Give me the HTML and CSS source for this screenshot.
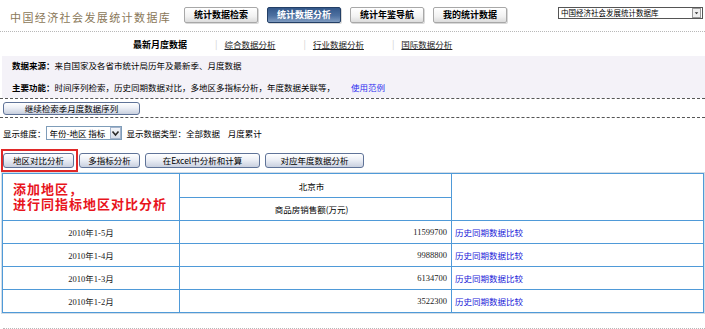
FILE: index.html
```html
<!DOCTYPE html>
<html lang="zh-CN">
<head>
    <meta charset="UTF-8">
    <meta name="viewport" content="width=device-width, initial-scale=1.0">
    <title>中国经济社会发展统计数据库</title>
    <link rel="stylesheet" href="styles.css">
</head>
<body>
    <div class="header">
        <div class="logo">中国经济社会发展统计数据库</div>
        <div class="tabs">
            <div class="tab">统计数据检索</div>
            <div class="tab active">统计数据分析</div>
            <div class="tab">统计年鉴导航</div>
            <div class="tab">我的统计数据</div>
        </div>
        <span class="select-wrap db-select">
            <select>
                <option>中国经济社会发展统计数据库</option>
            </select>
            <span class="arrow">
                <svg width="8" height="8" viewBox="0 0 8 8"><polygon points="2,3 6,3 4,5.5" fill="#333"/></svg>
            </span>
        </span>
    </div>

    <div class="subnav">
        <span class="current">最新月度数据</span>
        <span class="sep">|</span><a href="#">综合数据分析</a>
        <span class="sep">|</span><a href="#">行业数据分析</a>
        <span class="sep">|</span><a href="#">国际数据分析</a>
    </div>

    <!-- 数据库说明 -->
    <div class="info">
        <p><strong>数据来源：</strong>来自国家及各省市统计局历年及最新季、月度数据</p>
        <p><strong>主要功能：</strong>时间序列检索，历史同期数据对比，多地区多指标分析，年度数据关联等，<a class="demo" href="#">使用范例</a></p>
    </div>

    <div class="more-row">
        <button class="btn btn-more">继续检索季月度数据序列</button>
    </div>

    <div class="dim-row">
        显示维度：
        <span class="select-wrap dim-select">
            <select>
                <option>年份-地区 指标</option>
            </select>
            <span class="arrow">
                <svg width="9" height="11" viewBox="0 0 9 11"><path d="M1.5 3.5 L4.5 7 L7.5 3.5" fill="none" stroke="#2a2a2a" stroke-width="1.6"/></svg>
            </span>
        </span>
        <span class="dim-type">显示数据类型：全部数据&nbsp;&nbsp;&nbsp;&nbsp;月度累计</span>
    </div>

    <div class="actions">
        <span class="mark"><button class="btn btn-compare">地区对比分析</button></span>
        <button class="btn btn-multi">多指标分析</button>
        <button class="btn btn-excel">在Excel中分析和计算</button>
        <button class="btn btn-year">对应年度数据分析</button>
    </div>

    <table class="data">
        <colgroup>
            <col class="col-time">
            <col class="col-value">
            <col class="col-link">
        </colgroup>
        <tr class="head-row">
            <td rowspan="2" class="note">添加地区，<br>进行同指标地区对比分析</td>
            <td class="center">北京市</td>
            <td rowspan="2"></td>
        </tr>
        <tr>
            <td class="center">商品房销售额(万元)</td>
        </tr>
        <tr>
            <td class="time">2010年1-5月</td>
            <td class="num">11599700</td>
            <td class="link"><a href="#">历史同期数据比较</a></td>
        </tr>
        <tr>
            <td class="time">2010年1-4月</td>
            <td class="num">9988800</td>
            <td class="link"><a href="#">历史同期数据比较</a></td>
        </tr>
        <tr>
            <td class="time">2010年1-3月</td>
            <td class="num">6134700</td>
            <td class="link"><a href="#">历史同期数据比较</a></td>
        </tr>
        <tr>
            <td class="time">2010年1-2月</td>
            <td class="num">3522300</td>
            <td class="link"><a href="#">历史同期数据比较</a></td>
        </tr>
    </table>

    <div class="footer-line"></div>
</body>
</html>
```

FILE: styles.css
```css
* {
    box-sizing: border-box;
}

body {
    margin: 0;
    font-family: "Noto Sans CJK SC", sans-serif;
    font-size: 8.5px;
    color: #000;
    background: #fff;
}

a {
    text-decoration: none;
}

/* header */
.header {
    display: flex;
    align-items: flex-start;
    height: 32px;
    padding-top: 7px;
    border-bottom: 1px dotted #b8b8b8;
}

.logo {
    width: 184px;
    padding-left: 10px;
    margin-top: 3px;
    font-size: 11px;
    line-height: 14px;
    letter-spacing: 1.4px;
    color: #8a7758;
    white-space: nowrap;
}

.tabs {
    display: flex;
    gap: 9px;
}

.tab {
    width: 74px;
    height: 16px;
    line-height: 14px;
    font-size: 9px;
    font-weight: bold;
    text-align: center;
    border: 1px solid #a8a8a8;
    border-radius: 2px;
    background: linear-gradient(#ffffff, #f2f2f2 60%, #dcdcdc);
    box-shadow: 1px 1px 0 #d8d8d8;
}

.tab.active {
    color: #fff;
    border-color: #233f66;
    background: linear-gradient(#34588a, #4d70a0 55%, #7f9bc0);
}

.select-wrap {
    position: relative;
    display: inline-block;
}

.select-wrap select {
    appearance: none;
    -webkit-appearance: none;
    display: block;
    margin: 0;
    padding: 0 0 0 2px;
    font-family: "Noto Sans CJK SC", sans-serif;
    color: #000;
    background: #fff;
    border: 1px solid #7f9db9;
    border-radius: 0;
}

.select-wrap .arrow {
    position: absolute;
    display: flex;
    align-items: center;
    justify-content: center;
}

.db-select {
    margin-left: auto;
    margin-right: 2px;
}

.db-select select {
    width: 145px;
    height: 12px;
    font-size: 7.5px;
    line-height: 10px;
    border-color: #555;
}

.db-select .arrow {
    right: 2px;
    top: 1px;
    width: 9px;
    height: 10px;
    border: 1px solid #9a9a9a;
    background: #f0f0f0;
}

/* sub navigation */
.subnav {
    display: flex;
    align-items: center;
    height: 24px;
    padding-left: 133px;
    font-size: 9px;
}

.subnav .current {
    font-weight: bold;
}

.subnav .sep {
    color: #d0d0d0;
    margin: 0 7px 0 28px;
}

.subnav a {
    color: #222;
    font-size: 8.5px;
    text-decoration: underline;
}

/* info box */
.info {
    height: 42px;
    margin-left: 2px;
    padding: 3px 0 0 10px;
    background: #f4f2f8;
}

.info p {
    margin: 0 0 10px;
    line-height: 12px;
}

.info .demo {
    color: #2e2ef0;
    margin-left: 16px;
}

.more-row {
    height: 20px;
    padding: 3px 0 0 3px;
    border-top: 1px dashed #555;
    border-bottom: 1px dashed #555;
}

.btn {
    height: 15px;
    padding: 0;
    font-family: "Noto Sans CJK SC", sans-serif;
    font-size: 8.5px;
    line-height: 13px;
    color: #000;
    border: 1px solid #5f7398;
    border-radius: 3px;
    background: linear-gradient(#ffffff, #eceff6 45%, #c9d0df);
    cursor: pointer;
}

.btn-more {
    width: 137px;
    height: 13px;
    line-height: 11px;
}

.dim-row {
    display: flex;
    align-items: center;
    height: 22px;
    padding: 8px 0 0 3px;
}

.dim-select select {
    width: 76px;
    height: 14px;
    font-size: 8.5px;
    line-height: 12px;
    padding-left: 3px;
}

.dim-select .arrow {
    right: 1px;
    top: 1px;
    width: 11px;
    height: 12px;
    border: 1px solid #a4b4cc;
    background: linear-gradient(#f4f6fa, #d8dfea);
}

.dim-type {
    margin-left: 5px;
}

/* action buttons */
.actions {
    display: flex;
    gap: 5px;
    padding: 13px 0 0 3px;
}

.mark {
    position: relative;
    display: inline-block;
}

.mark::after {
    content: "";
    position: absolute;
    left: -2px;
    right: -4px;
    top: -4px;
    bottom: -4px;
    border: 2px solid #e02828;
}

.btn-compare { width: 71px; }
.btn-multi { width: 61px; }
.btn-excel { width: 115px; }
.btn-year { width: 99px; }

/* data table */
.data {
    width: 701px;
    margin: 5px 0 0 2px;
    border-collapse: collapse;
    table-layout: fixed;
    box-shadow: 0 0 0 1px #d4dde6;
}

.col-time { width: 177px; }
.col-value { width: 272px; }
.col-link { width: 252px; }

.data td {
    height: 23px;
    padding: 0;
    border: 1px solid #4f9ad8;
    vertical-align: middle;
}

.data .head-row td {
    height: 24px;
}

.data .center {
    text-align: center;
    padding-right: 8px;
}

.data .note {
    padding-left: 10px;
    font-family: "Liberation Sans", "Noto Sans CJK SC", sans-serif;
    font-size: 13px;
    line-height: 15px;
    letter-spacing: 1px;
    font-weight: bold;
    color: #e8141c;
}

.data .time {
    text-align: center;
    font-family: "Liberation Serif", "Noto Sans CJK SC", serif;
    color: #222;
}

.data .num {
    text-align: right;
    padding-right: 4px;
    font-family: "Liberation Serif", "Noto Sans CJK SC", serif;
    color: #222;
}

.data .link {
    padding-left: 3px;
}

.data .link a {
    color: #1a1ad8;
}

.footer-line {
    margin: 15px 0 0 3px;
    border-top: 1px dotted #b8b8b8;
}
```
